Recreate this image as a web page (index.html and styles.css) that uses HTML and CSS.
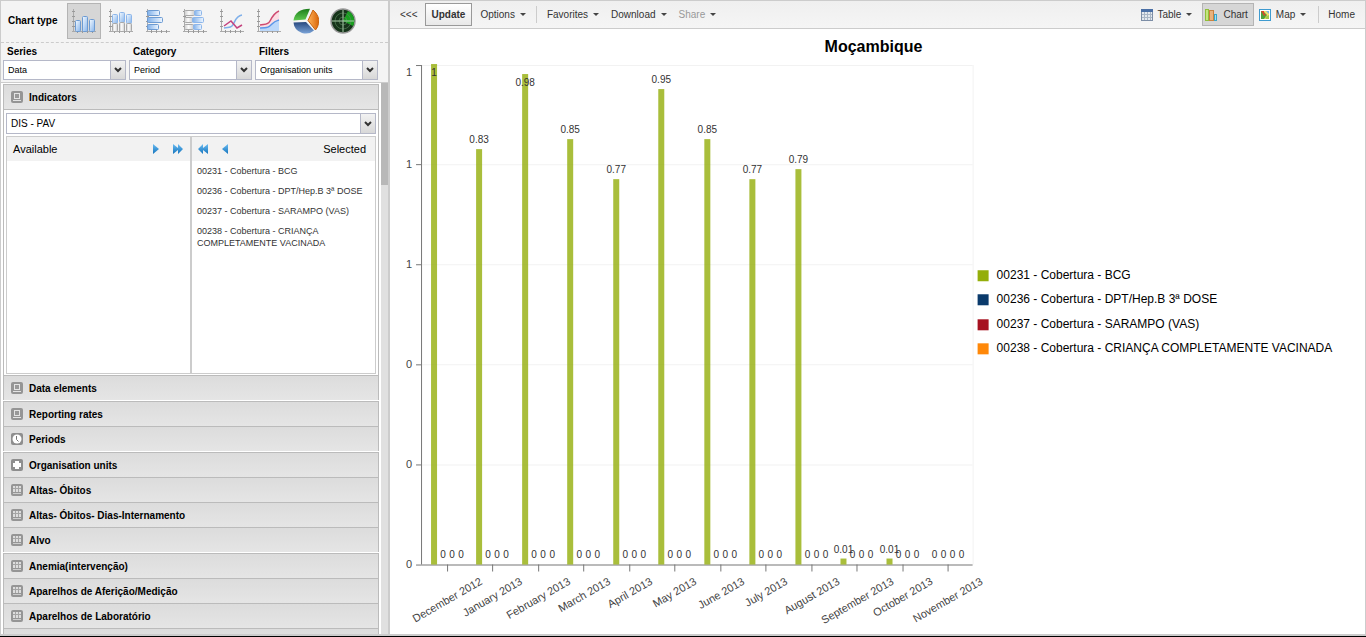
FILE: index.html
```html
<!DOCTYPE html>
<html lang="en">
<head>
<meta charset="utf-8">
<title>Data Visualizer</title>
<link rel="stylesheet" href="styles.css">
</head>
<body>
<svg class="defs" aria-hidden="true">
  <defs>
    <linearGradient id="blue" x1="0" x2="1" y1="0" y2="1"><stop offset="0" stop-color="#f4faff"/><stop offset="1" stop-color="#86b4ec"/></linearGradient>
    <linearGradient id="blueH" x1="0" x2="1" y1="0" y2="0"><stop offset="0" stop-color="#7fb0ea"/><stop offset="1" stop-color="#eef6ff"/></linearGradient>
    <linearGradient id="grey" x1="0" x2="1" y1="0" y2="0"><stop offset="0" stop-color="#ccc"/><stop offset=".45" stop-color="#fcfcfc"/><stop offset="1" stop-color="#ccc"/></linearGradient>
    <linearGradient id="arrow" x1="0" x2="0" y1="0" y2="1"><stop offset="0" stop-color="#6bbcf2"/><stop offset="1" stop-color="#1474bd"/></linearGradient>
    <linearGradient id="pg" x1="0" x2="0" y1="0" y2="1"><stop offset="0" stop-color="#1b7d1b"/><stop offset="1" stop-color="#5fc94f"/></linearGradient>
    <linearGradient id="po" x1="0" x2="1" y1="0" y2="0"><stop offset="0" stop-color="#ffb35a"/><stop offset="1" stop-color="#d9660a"/></linearGradient>
    <linearGradient id="pb" x1="0" x2="0" y1="0" y2="1"><stop offset="0" stop-color="#27487e"/><stop offset="1" stop-color="#7ba4d8"/></linearGradient>
    <symbol id="axes" viewBox="0 0 26 26"><path d="M2.500 1v23M1 23.500h24" fill="none" stroke="#aaa"/><path d="M1 3.500h3M1 8.500h3M1 13.500h3M1 18.500h3M6.500 22v3M11.500 22v3M16.500 22v3M21.500 22v3" fill="none" stroke="#999"/></symbol>
    <symbol id="screen" viewBox="0 0 12 12"><rect width="12" height="12" rx="2" fill="#959595"/><rect x="3.500" y="2.500" width="5" height="5" fill="#999" stroke="#e4e4e4"/><path d="M2 9.500h8" stroke="#e4e4e4"/></symbol>
    <symbol id="clock" viewBox="0 0 12 12"><rect width="12" height="12" rx="2" fill="#8e8e8e"/><circle cx="6" cy="6" r="4.500" fill="#fff"/><path d="M5.500 3v3.500l2 2" fill="none" stroke="#777"/></symbol>
    <symbol id="plus" viewBox="0 0 12 12"><rect width="12" height="12" rx="2" fill="#8e8e8e"/><path d="M6 2v8M2 6h8" stroke="#fff" stroke-width="4"/></symbol>
    <symbol id="grid" viewBox="0 0 12 12"><rect width="12" height="12" rx="2" fill="#959595"/><rect x="2" y="2" width="8" height="6" fill="#ddd"/><path d="M2 9.500h8" stroke="#ccc"/><path d="M4.500 2v6M7.500 2v6M2 4.500h8" stroke="#a5a5a5"/></symbol>
    <symbol id="one" viewBox="0 0 6 10"><path d="M0 0l6 5-6 5z" fill="url(#arrow)"/></symbol>
    <symbol id="two" viewBox="0 0 10 10"><path d="M0 0l5 4V0l5 5-5 5V6l-5 4z" fill="url(#arrow)"/></symbol>
  </defs>
</svg>
<div class="app">
  <aside class="side">
    <div class="types">
      <span class="types-label">Chart type</span>
      <button class="type on" aria-label="Column"><svg viewBox="0 0 26 26"><use href="#axes"/><g fill="url(#blue)" stroke="#6d9bd2"><rect x="4.500" y="12.500" width="5" height="11" rx="1"/><rect x="11.500" y="8.500" width="5" height="15" rx="1"/><rect x="18.500" y="11.500" width="5" height="12" rx="1"/></g></svg></button>
      <button class="type" aria-label="Stacked column"><svg viewBox="0 0 26 26"><use href="#axes"/><g fill="url(#blue)" stroke="#8db6ea"><rect x="4.500" y="6.500" width="5" height="9" rx="1"/><rect x="11.500" y="4.500" width="5" height="10" rx="1"/><rect x="18.500" y="6.500" width="5" height="9" rx="1"/></g><g fill="url(#grey)" stroke="#a8a8a8"><rect x="4.500" y="15.500" width="5" height="8" rx="1"/><rect x="11.500" y="14.500" width="5" height="9" rx="1"/><rect x="18.500" y="15.500" width="5" height="8" rx="1"/></g></svg></button>
      <button class="type" aria-label="Bar"><svg viewBox="0 0 26 26"><use href="#axes"/><g fill="url(#blueH)" stroke="#6d9bd2"><rect x="2.500" y="2.500" width="12" height="5" rx="1"/><rect x="2.500" y="9.500" width="15" height="5" rx="1"/><rect x="2.500" y="16.500" width="11" height="5" rx="1"/></g></svg></button>
      <button class="type" aria-label="Stacked bar"><svg viewBox="0 0 26 26"><use href="#axes"/><g fill="url(#grey)" stroke="#a8a8a8"><rect x="2.500" y="2.500" width="10" height="5" rx="1"/><rect x="2.500" y="9.500" width="8" height="5" rx="1"/><rect x="2.500" y="16.500" width="9" height="5" rx="1"/></g><g fill="url(#blueH)" stroke="#8db6ea"><rect x="12.500" y="2.500" width="7" height="5" rx="1"/><rect x="10.500" y="9.500" width="11" height="5" rx="1"/><rect x="11.500" y="16.500" width="8" height="5" rx="1"/></g></svg></button>
      <button class="type" aria-label="Line"><svg viewBox="0 0 26 26"><use href="#axes"/><path d="M5 20c4-1 6 0 8-2 3-3 3-10 10-11" fill="none" stroke="#7fb0ea" stroke-width="1.500"/><path d="M5 18l7-5 6 7 5-3" fill="none" stroke="#c4437f" stroke-width="1.500"/></svg></button>
      <button class="type" aria-label="Area"><svg viewBox="0 0 26 26"><use href="#axes"/><path d="M4 20l8-1 5-5 6-2v11H4z" fill="#bcd8fa"/><path d="M4 17l8-1 6-9 5-4v9l-6 2-5 5-8 1z" fill="#fbdde4"/><path d="M4 20c8 0 9-1 12-4s4-3 7-4" fill="none" stroke="#5b96e8" stroke-width="1.500"/><path d="M4 17c5-1 8 0 10-4s4-8 9-10" fill="none" stroke="#cf4a70" stroke-width="1.500"/></svg></button>
      <button class="type" aria-label="Pie"><svg viewBox="0 0 26 26"><path d="M12.500 11.500L.500 12.500Q2 1 17 .800z" fill="url(#pg)"/><path d="M15 12.500l5-10.500Q27 8 25.500 15.500Q25 19 22.500 22z" fill="url(#po)" stroke="#c8620e"/><path d="M13 14l8 8.500Q16 27 9 25Q1 22 .500 14.500z" fill="url(#pb)"/></svg></button>
      <button class="type" aria-label="Radar"><svg viewBox="0 0 26 26"><circle cx="13" cy="13" r="12" fill="#16341a" stroke="#999" stroke-width="1.500"/><path d="M13 13L18 3a11 11 0 0 1 5 15z" fill="#18a01f"/><g fill="none" stroke="#5d8a60" stroke-width=".600"><circle cx="13" cy="13" r="4"/><circle cx="13" cy="13" r="8"/></g><path d="M13 2v22M2 13h22" stroke="#a9cbaa"/></svg></button>
    </div>
    <div class="dims">
      <label class="dim"><span>Series</span><select><option>Data</option></select></label>
      <label class="dim"><span>Category</span><select><option>Period</option></select></label>
      <label class="dim"><span>Filters</span><select><option>Organisation units</option></select></label>
    </div>
    <div class="scroller">
      <div class="accordion">
        <button class="head"><svg><use href="#screen"/></svg>Indicators</button>
        <div class="panel">
          <select class="group" aria-label="Indicator group"><option>DIS - PAV</option></select>
          <div class="lists">
            <section class="list">
              <header class="bar"><span>Available</span>
                <span class="moves"><button class="move" aria-label="Add"><svg class="s1"><use href="#one"/></svg></button><button class="move" aria-label="Add all"><svg class="s2"><use href="#two"/></svg></button></span></header>
            </section>
            <section class="list">
              <header class="bar"><span class="moves back"><button class="move" aria-label="Remove all"><svg class="s2"><use href="#two"/></svg></button><button class="move" aria-label="Remove"><svg class="s1"><use href="#one"/></svg></button></span><span>Selected</span></header>
              <ul class="items">
                <li>00231 - Cobertura - BCG</li>
                <li>00236 - Cobertura - DPT/Hep.B 3ª DOSE</li>
                <li>00237 - Cobertura - SARAMPO (VAS)</li>
                <li>00238 - Cobertura - CRIANÇA COMPLETAMENTE VACINADA</li>
              </ul>
            </section>
          </div>
        </div>
        <button class="head spaced"><svg><use href="#screen"/></svg>Data elements</button>
        <button class="head"><svg><use href="#screen"/></svg>Reporting rates</button>
        <button class="head spaced"><svg><use href="#clock"/></svg>Periods</button>
        <button class="head"><svg><use href="#plus"/></svg>Organisation units</button>
        <button class="head"><svg><use href="#grid"/></svg>Altas- Óbitos</button>
        <button class="head"><svg><use href="#grid"/></svg>Altas- Óbitos- Dias-Internamento</button>
        <button class="head spaced"><svg><use href="#grid"/></svg>Alvo</button>
        <button class="head"><svg><use href="#grid"/></svg>Anemia(intervenção)</button>
        <button class="head"><svg><use href="#grid"/></svg>Aparelhos de Aferição/Medição</button>
        <button class="head"><svg><use href="#grid"/></svg>Aparelhos de Laboratório</button>
        <div class="head"></div>
      </div>
      <div class="track"><div class="thumb"></div></div>
    </div>
  </aside>
  <main class="main">
    <nav class="toolbar">
      <button class="tool">&lt;&lt;&lt;</button>
      <button class="tool update">Update</button>
      <button class="tool menu">Options</button>
      <span class="sep"></span>
      <button class="tool menu">Favorites</button>
      <button class="tool menu">Download</button>
      <button class="tool menu" disabled>Share</button>
      <span class="fill"></span>
      <button class="tool menu"><svg viewBox="0 0 12 12"><rect x=".5" y=".5" width="11" height="11" fill="#e4e9ef" stroke="#7d8ea6"/><path d="M0 1.500h12" stroke="#4a6fa5" stroke-width="3"/><path d="M1 5.500h10M1 8.500h10M3.500 3v8M6.500 3v8M9.500 3v8" stroke="#a9b6c5"/></svg>Table</button>
      <button class="tool on"><svg viewBox="0 0 12 12"><rect x=".5" y=".5" width="3" height="11" fill="#c5e57e" stroke="#8fbf3a"/><rect x="4.500" y="1.500" width="4" height="10" fill="#e9b27c" stroke="#c9823f"/><rect x="9.500" y="5.500" width="2" height="6" fill="#a5e0f3" stroke="#3ba6c9"/></svg>Chart</button>
      <button class="tool menu"><svg viewBox="0 0 12 12"><rect x=".5" y=".5" width="11" height="11" fill="#fff" stroke="#3f9bd0"/><path d="M2 2h8v8H2z" fill="#f4dd6b"/><path d="M2 2h2l4 4-3 4H2z" fill="#4da23c"/><path d="M2 2h3v2l2 2-2 1z" fill="#d9482b"/><path d="M7 2h3v3z" fill="#77b5e6"/><path d="M6 8l4-2v4H7z" fill="#a5c84d"/></svg>Map</button>
      <span class="sep"></span>
      <button class="tool">Home</button>
    </nav>
    <svg class="chart" id="chart" viewBox="0 0 974 600" role="img" aria-label="Moçambique"></svg>
  </main>
</div>
<script src="chart.js"></script>
</body>
</html>
```
FILE: styles.css
```css
* { box-sizing: border-box; }
body {
  margin: 0;
  background: #fff;
  color: #000;
  font-family: "Liberation Sans", Arial, sans-serif;
  font-size: 10px;
}
button, select { font: inherit; color: inherit; margin: 0; }
button { border: 0; background: none; padding: 0; }
.defs { position: absolute; width: 0; height: 0; }
.app {
  display: flex;
  height: 100vh;
  overflow: hidden;
  border-top: 1px solid #ccc;
  border-bottom: 1px solid #000;
}
.side {
  flex: none;
  width: 390px;
  display: flex;
  flex-direction: column;
  border: solid #ccc;
  border-width: 0 2px 2px 1px;
}
.types {
  display: flex;
  align-items: center;
  gap: 3px;
  height: 42px;
  padding: 0 7px 2px;
  background: #f4f4f4;
  border-bottom: 1px dashed #ccc;
}
.types-label { width: 56px; font-weight: bold; }
.type {
  display: grid;
  place-items: center;
  width: 34px;
  height: 36px;
  border: 1px solid transparent;
}
.type svg { width: 26px; height: 26px; }
.type.on { background: #d6d6d6; border-color: #b4b4b4; }
.dims {
  display: flex;
  gap: 3px;
  height: 40px;
  padding: 0 3px 0 2px;
  background: #f4f4f4;
  border-bottom: 1px solid #ccc;
}
.dim { width: 123px; font-weight: bold; }
.dim span { display: block; padding: 0 4px; line-height: 17px; }
select {
  display: block;
  width: 100%;
  height: 20px;
  padding: 0 4px;
  appearance: none;
  border: 1px solid #b5b8c8;
  border-radius: 0;
  font-size: 9px;
  font-weight: normal;
  background:
    url("data:image/svg+xml,%3Csvg xmlns='http://www.w3.org/2000/svg' width='8' height='6'%3E%3Cpath d='M1 1l3 3 3-3' fill='none' stroke='%23333' stroke-width='2'/%3E%3C/svg%3E") right 3px center no-repeat,
    linear-gradient(#b5b8c8, #b5b8c8) right 14px top / 1px 100% no-repeat,
    linear-gradient(#f2f2f2, #d8d8d8) right top / 14px 100% no-repeat,
    #fff;
}
.scroller { flex: 1; min-height: 0; display: flex; justify-content: space-between; padding-left: 2px; overflow: hidden; }
.accordion { width: 376px; padding-top: 1px; }
.head {
  display: flex;
  align-items: center;
  gap: 6px;
  width: 100%;
  height: 25px;
  padding: 0 7px;
  border: 1px solid #bbb;
  border-width: 1px 1px 0;
  background: linear-gradient(#dcdcdc, #e5e5e5);
  font-weight: bold;
}
.head.spaced { margin-bottom: 1px; }
.head svg { width: 12px; height: 12px; }
.panel { padding: 3px 2px 1px; border: 1px solid #bbb; border-bottom: 0; }
.group { height: 21px; font-size: 10px; }
.lists { display: grid; grid-template-columns: 183px 1fr; height: 238px; margin-top: 2px; border: 1px solid #ccc; }
.list + .list { border-left: 2px solid #ccc; }
.bar {
  display: flex;
  align-items: center;
  justify-content: space-between;
  height: 24px;
  padding: 0 9px 0 6px;
  background: #f2f2f2;
  font-size: 11px;
}
.list:first-child .bar { padding-right: 7px; }
.moves { display: flex; gap: 14px; }
.back { transform: scaleX(-1); flex-direction: row-reverse; }
.move, .move svg { display: block; }
.s1 { width: 6px; height: 10px; }
.s2 { width: 10px; height: 10px; }
.items { margin: 0; padding: 4px 5px; list-style: none; font-size: 9px; line-height: 12px; color: #333; }
.items li { padding: 0 0 8px; }
.track { width: 7px; background: #e0e0e0; }
.thumb { height: 102px; background: #b8b8b8; }
.main { flex: 1; min-width: 0; border-right: 1px solid #ccc; border-bottom: 2px solid #ccc; overflow: hidden; }
.toolbar {
  display: flex;
  align-items: center;
  height: 28px;
  padding: 0 5px;
  background: linear-gradient(#efefef, #f5f5f5);
  border-bottom: 1px solid #ccc;
  color: #333;
}
.tool { display: flex; align-items: center; height: 23px; padding: 0 4px; gap: 6px; border: 1px solid transparent; }
.tool svg { width: 12px; height: 12px; }
.tool.menu { margin: 0 1px; gap: 5px; }
.tool.menu::after { content: ""; border: solid transparent; border-width: 3px 3px 0; border-top-color: #444; }
.tool.update { margin: 0 2px; padding: 0 6px; border-color: #999; background: linear-gradient(#fff, #e8e8e8); font-weight: bold; }
.tool.on { padding: 0 5px 0 2px; margin-left: 4px; background: #d6d6d6; border-color: #b4b4b4; }
.tool.on + .menu { margin: 0 3px 0 0; }
.tool:disabled { color: #999; }
.sep { width: 1px; height: 17px; margin: 0 4px; background: #ccc; }
.fill { flex: 1; }
.chart { display: block; width: 100%; height: auto; font-family: "Liberation Sans", Arial, sans-serif; }
.title { font-size: 16px; font-weight: bold; text-anchor: middle; }
.axis-text { font-size: 11px; fill: #444; text-anchor: end; }
.value { font-size: 10px; fill: #333; text-anchor: middle; }
.legend { font-size: 12px; fill: #000; }
.bar-rect { fill: #94ae0a; fill-opacity: .8; }
.line { stroke: #777; stroke-width: 1; }
.rule { stroke: #f2f2f2; stroke-width: 1; }
```
FILE: chart.js
```js
(() => {
  const svg = document.getElementById('chart');
  const NS = 'http://www.w3.org/2000/svg';
  const add = (tag, attrs, text) => {
    const el = document.createElementNS(NS, tag);
    for (const k in attrs) el.setAttribute(k, attrs[k]);
    if (text !== undefined) el.textContent = text;
    svg.appendChild(el);
    return el;
  };
  const line = (cls, x1, y1, x2, y2) => add('line', { class: cls, x1, y1, x2, y2 });
  const base = 535, top = 36, left = 31, right = 582, step = 45.5;
  const values = [1, 0.83, 0.98, 0.85, 0.77, 0.95, 0.85, 0.77, 0.79, 0.01, 0.01, 0];
  const months = ['December 2012', 'January 2013', 'February 2013', 'March 2013', 'April 2013', 'May 2013',
    'June 2013', 'July 2013', 'August 2013', 'September 2013', 'October 2013', 'November 2013'];

  add('text', { class: 'title', x: 483, y: 23 }, 'Moçambique');
  [1, 1, 1, 0, 0, 0].forEach((v, i) => {
    const y = top + 0.5 + i * 100 - (i ? 1 : 0);
    if (i < 5) line('rule', left, y, right, y);
    line('line', left - 5, y, left, y);
    add('text', { class: 'axis-text', x: 22, y: i ? y + 3 : y + 10 }, v);
  });
  line('rule', right + 0.5, top, right + 0.5, base);
  line('line', left + 0.5, top, left + 0.5, base);
  line('line', left, base + 0.5, right, base + 0.5);

  values.forEach((v, i) => {
    const x = Math.round(40.8 + i * step);
    const h = v < 0.1 ? 6 : Math.round(v * 500);
    if (v) add('rect', { class: 'bar-rect', x, y: base - h, width: 6, height: h });
    const labelY = v > 0.96 ? base - h + 12 : v > 0.1 ? base - h - 6 : v ? base - 12 : base - 7;
    add('text', { class: 'value', x: x + 3, y: labelY }, v);
    for (let k = 1; k < 4; k++) add('text', { class: 'value', x: x + 3 + k * 9, y: base - 7 }, 0);
    const tick = Math.round(56.5 + i * step) + 0.5;
    line('line', tick, base, tick, base + 7);

    // Slanted labels are centred under their tick, with their upper ends level.
    const label = add('text', { class: 'axis-text' }, months[i]);
    const x2 = Math.round(tick + 2 + label.getComputedTextLength() / 2 * Math.cos(Math.PI / 6));
    const y2 = base + 19;
    label.setAttribute('x', x2);
    label.setAttribute('y', y2);
    label.setAttribute('transform', `rotate(-30 ${x2} ${y2})`);
  });

  [['#94ae0a', '00231 - Cobertura - BCG'],
   ['#0a3a6b', '00236 - Cobertura - DPT/Hep.B 3ª DOSE'],
   ['#a61120', '00237 - Cobertura - SARAMPO (VAS)'],
   ['#ff8809', '00238 - Cobertura - CRIANÇA COMPLETAMENTE VACINADA']
  ].forEach(([fill, label], i) => {
    const y = Math.round(241 + i * 24.3);
    add('rect', { x: 587, y, width: 11, height: 11, fill });
    add('text', { class: 'legend', x: 606, y: y + 9 }, label);
  });
})();
```
